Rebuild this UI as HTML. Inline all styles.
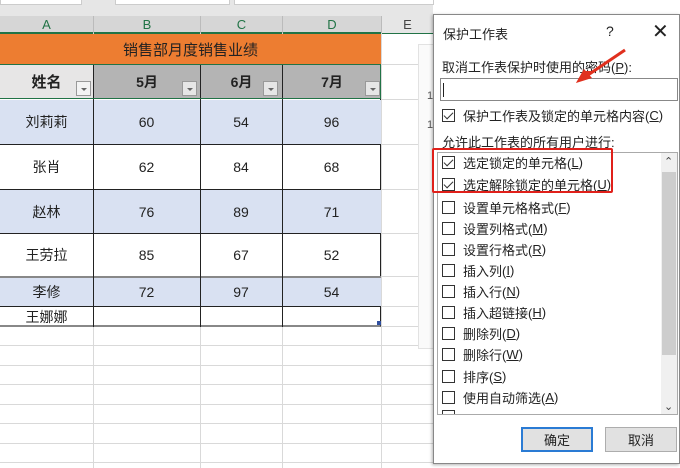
<!DOCTYPE html>
<html><head><meta charset="utf-8"><style>
*{margin:0;padding:0;box-sizing:border-box}
body{width:680px;height:468px;overflow:hidden;background:#fff;position:relative;font-family:"Liberation Sans","Noto Sans CJK SC",sans-serif;color:#222}
.a{position:absolute}
.c{position:absolute;display:flex;align-items:center;justify-content:center;font-size:14px}
.hl{position:absolute;height:1px;background:#d9d9d9;left:0;width:433px}
.vl{position:absolute;width:1px;background:#d9d9d9;top:33px;height:435px}
.dd{position:absolute;width:15px;height:15px;border:1px solid #999;background:#e6e6e6}
.dd:after{content:"";position:absolute;left:4px;top:6px;border-left:3px solid transparent;border-right:3px solid transparent;border-top:3px solid #666}
.it{position:absolute;left:442px;font-size:13px;display:flex;align-items:center;height:18px}
.cb{width:13px;height:13px;border:1px solid #333;margin-right:8px;background:#fff;position:relative}
.cb.k:after{content:"";position:absolute;left:3px;top:0px;width:4px;height:8px;border:solid #333;border-width:0 1.5px 1.5px 0;transform:rotate(45deg)}
</style></head><body>
<!-- top strip -->
<div class="a" style="left:0;top:0;width:433px;height:16px;background:#e6e6e6"></div>
<div class="a" style="left:0;top:0;width:82px;height:5px;background:#fff;border:1px solid #ccc;border-top:0"></div>
<div class="a" style="left:115px;top:0;width:115px;height:5px;background:#fff;border:1px solid #ccc;border-top:0"></div>
<div class="a" style="left:234px;top:0;width:200px;height:5px;background:#fff;border:1px solid #ccc;border-top:0"></div>
<!-- column headers -->
<div class="a" style="left:0;top:16px;width:433px;height:18px;background:#d6d6d6;border-bottom:2px solid #217346"></div>
<div class="c" style="left:0;top:16px;width:93px;height:17px;color:#217346;font-size:13px">A</div>
<div class="c" style="left:93px;top:16px;width:107px;height:17px;color:#217346;font-size:13px;border-left:1px solid #bbb">B</div>
<div class="c" style="left:200px;top:16px;width:82px;height:17px;color:#217346;font-size:13px;border-left:1px solid #bbb">C</div>
<div class="c" style="left:282px;top:16px;width:99px;height:17px;color:#217346;font-size:13px;border-left:1px solid #bbb">D</div>
<div class="c" style="left:381px;top:16px;width:52px;height:17px;color:#444;font-size:13px;background:#e6e6e6;border-left:1px solid #bbb">E</div>
<!-- gridlines -->
<div class="vl" style="left:93px"></div><div class="vl" style="left:200px"></div><div class="vl" style="left:282px"></div><div class="vl" style="left:381px"></div>
<div class="hl" style="top:345px"></div><div class="hl" style="top:365px"></div><div class="hl" style="top:384px"></div><div class="hl" style="top:404px"></div><div class="hl" style="top:423px"></div><div class="hl" style="top:443px"></div><div class="hl" style="top:462px"></div>
<div class="hl" style="top:64px;left:381px;width:52px"></div><div class="hl" style="top:99px;left:381px;width:52px"></div><div class="hl" style="top:144px;left:381px;width:52px"></div><div class="hl" style="top:189px;left:381px;width:52px"></div><div class="hl" style="top:233px;left:381px;width:52px"></div><div class="hl" style="top:276px;left:381px;width:52px"></div><div class="hl" style="top:306px;left:381px;width:52px"></div><div class="hl" style="top:326px;left:381px;width:52px"></div>
<!-- title -->
<div class="c" style="left:0;top:34px;width:381px;height:30px;background:#ed7d31;font-size:15px;color:#222">销售部月度销售业绩</div>
<!-- header row -->
<div class="a" style="left:0;top:64px;width:381px;height:35px;background:#b4b4b4;border:1px solid #217346;border-left:0"></div>
<div class="c" style="left:0;top:65px;width:93px;height:33px;background:#e7e6e6;font-weight:bold;font-size:15px">姓名</div>
<div class="dd" style="left:76px;top:81px;background:#f3f3f3"></div>
<div class="c" style="left:93px;top:65px;width:107px;height:33px;font-weight:bold;border-left:1px solid #222">5月</div>
<div class="dd" style="left:182px;top:81px"></div>
<div class="c" style="left:200px;top:65px;width:82px;height:33px;font-weight:bold;border-left:1px solid #222">6月</div>
<div class="dd" style="left:263px;top:81px"></div>
<div class="c" style="left:282px;top:65px;width:99px;height:33px;font-weight:bold;border-left:1px solid #222">7月</div>
<div class="dd" style="left:365px;top:81px"></div>
<!-- data -->
<div class="a" style="left:0;top:99px;width:381px;height:228px;border-bottom:2px solid #888;border-right:1px solid #222"></div>
<div class="a" style="left:0;top:100px;width:381px;height:44px;background:#d9e1f2"></div>
<div class="a" style="left:0;top:189px;width:381px;height:44px;background:#d9e1f2"></div>
<div class="a" style="left:0;top:276px;width:381px;height:30px;background:#d9e1f2;border-top:2px solid #888"></div>
<div class="a" style="left:0;top:144px;width:381px;height:1px;background:#222"></div>
<div class="a" style="left:0;top:189px;width:381px;height:1px;background:#222"></div>
<div class="a" style="left:0;top:233px;width:381px;height:1px;background:#222"></div>
<div class="a" style="left:0;top:306px;width:381px;height:1px;background:#222"></div>
<div class="a" style="left:93px;top:99px;width:1px;height:228px;background:#222"></div>
<div class="a" style="left:200px;top:99px;width:1px;height:228px;background:#222"></div>
<div class="a" style="left:282px;top:99px;width:1px;height:228px;background:#222"></div>
<div class="a" style="left:377px;top:321px;width:4px;height:4px;background:#3050a0"></div>

<div class="c" style="left:0;top:100px;width:93px;height:44px">刘莉莉</div><div class="c" style="left:93px;top:100px;width:107px;height:44px">60</div><div class="c" style="left:200px;top:100px;width:82px;height:44px">54</div><div class="c" style="left:282px;top:100px;width:99px;height:44px">96</div>
<div class="c" style="left:0;top:145px;width:93px;height:44px">张肖</div><div class="c" style="left:93px;top:145px;width:107px;height:44px">62</div><div class="c" style="left:200px;top:145px;width:82px;height:44px">84</div><div class="c" style="left:282px;top:145px;width:99px;height:44px">68</div>
<div class="c" style="left:0;top:190px;width:93px;height:43px">赵林</div><div class="c" style="left:93px;top:190px;width:107px;height:43px">76</div><div class="c" style="left:200px;top:190px;width:82px;height:43px">89</div><div class="c" style="left:282px;top:190px;width:99px;height:43px">71</div>
<div class="c" style="left:0;top:234px;width:93px;height:42px">王劳拉</div><div class="c" style="left:93px;top:234px;width:107px;height:42px">85</div><div class="c" style="left:200px;top:234px;width:82px;height:42px">67</div><div class="c" style="left:282px;top:234px;width:99px;height:42px">52</div>
<div class="c" style="left:0;top:278px;width:93px;height:28px">李修</div><div class="c" style="left:93px;top:278px;width:107px;height:28px">72</div><div class="c" style="left:200px;top:278px;width:82px;height:28px">97</div><div class="c" style="left:282px;top:278px;width:99px;height:28px">54</div>
<div class="c" style="left:0;top:307px;width:93px;height:19px">王娜娜</div>
<!-- faint panel -->
<div class="a" style="left:418px;top:44px;width:16px;height:305px;border:1px solid #e2e2e2;background:#fafafa"></div>
<div class="a" style="left:427px;top:90px;font-size:11px;color:#555">1</div>
<div class="a" style="left:427px;top:119px;font-size:11px;color:#555">1</div>
<!-- dialog -->
<div class="a" style="left:433px;top:14px;width:247px;height:450px;background:#fff;border:1px solid #888;box-shadow:-1px 1px 3px rgba(0,0,0,.3)"></div>
<div class="a" style="left:443px;top:24px;font-size:13px">保护工作表</div>
<div class="a" style="left:606px;top:23px;font-size:14px">?</div>
<div class="a" style="left:652px;top:19px;font-size:20px;font-weight:300">✕</div>
<div class="a" style="left:442px;top:57px;font-size:13px">取消工作表保护时使用的密码(<u>P</u>):</div>
<div class="a" style="left:440px;top:78px;width:238px;height:23px;border:1px solid #888"></div>
<div class="a" style="left:443px;top:83px;width:1px;height:14px;background:#222"></div>
<div class="it" style="top:106px"><div class="cb k"></div>保护工作表及锁定的单元格内容(<u>C</u>)</div>
<div class="a" style="left:442px;top:132px;font-size:13px">允许此工作表的所有用户进行:</div>
<div class="a" style="left:437px;top:152px;width:241px;height:263px;border:1px solid #aaa;overflow:hidden"></div>
<div class="a" style="left:661px;top:153px;width:16px;height:261px;background:#f0f0f0"></div>
<div class="a" style="left:662px;top:172px;width:14px;height:183px;background:#cdcdcd"></div>
<div class="a" style="left:664px;top:155px;font-size:11px;color:#444">⌃</div>
<div class="a" style="left:664px;top:400px;font-size:11px;color:#444">⌄</div>
<div class="it" style="top:153px"><div class="cb k"></div>选定锁定的单元格(<u>L</u>)</div>
<div class="it" style="top:175px"><div class="cb k"></div>选定解除锁定的单元格(<u>U</u>)</div>
<div class="it" style="top:198px"><div class="cb"></div>设置单元格格式(<u>F</u>)</div>
<div class="it" style="top:219px"><div class="cb"></div>设置列格式(<u>M</u>)</div>
<div class="it" style="top:240px"><div class="cb"></div>设置行格式(<u>R</u>)</div>
<div class="it" style="top:261px"><div class="cb"></div>插入列(<u>I</u>)</div>
<div class="it" style="top:282px"><div class="cb"></div>插入行(<u>N</u>)</div>
<div class="it" style="top:303px"><div class="cb"></div>插入超链接(<u>H</u>)</div>
<div class="it" style="top:324px"><div class="cb"></div>删除列(<u>D</u>)</div>
<div class="it" style="top:345px"><div class="cb"></div>删除行(<u>W</u>)</div>
<div class="it" style="top:367px"><div class="cb"></div>排序(<u>S</u>)</div>
<div class="it" style="top:388px"><div class="cb"></div>使用自动筛选(<u>A</u>)</div>
<div class="a" style="left:442px;top:410px;width:13px;height:4px;border:1px solid #333;border-bottom:0"></div>
<div class="a" style="left:432px;top:148px;width:181px;height:45px;border:2px solid #e0201a;border-radius:2px"></div>
<svg class="a" style="left:570px;top:45px" width="60" height="45"><line x1="55" y1="5" x2="15" y2="32" stroke="#e0301e" stroke-width="3"/><polygon points="6,38 22,26 13,26" fill="#e0301e"/><polygon points="6,38 14,24 22,33" fill="#e0301e"/></svg>
<div class="c" style="left:521px;top:427px;width:72px;height:25px;border:1px solid #2a7bd4;background:#e1e1e1;font-size:13px;box-shadow:inset 0 0 0 1px #2a7bd4">确定</div>
<div class="c" style="left:605px;top:427px;width:72px;height:25px;border:1px solid #adadad;background:#e1e1e1;font-size:13px">取消</div>
</body></html>
